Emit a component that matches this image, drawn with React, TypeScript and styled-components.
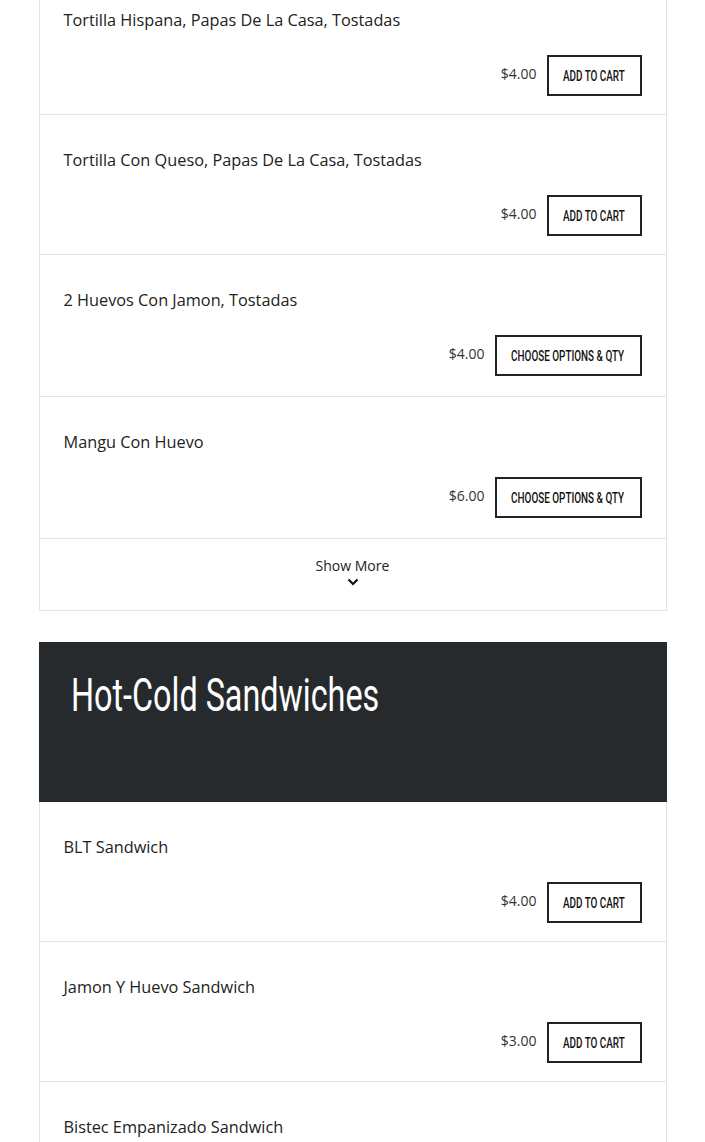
import React from 'react';
import styled, { createGlobalStyle } from 'styled-components';

const GlobalStyle = createGlobalStyle`
  html, body {
    margin: 0;
    padding: 0;
    background: #ffffff;
    font-family: "Open Sans", "Liberation Sans", sans-serif;
    color: #222;
  }
`;

// no condensed face installed, so Roboto gets squeezed horizontally
const condensed = `Roboto, "Liberation Sans", sans-serif`;

const Page = styled.div`
  width: 628px;
  margin: -25px auto 0;
  padding-bottom: 40px;
`;

const Menu = styled.div`
  border: 1px solid #e3e3e3;
  border-top: none;
`;

const Row = styled.div<{ $tall?: boolean }>`
  display: flex;
  flex-direction: column;
  padding: 33px 24px ${(p) => (p.$tall ? '20px' : '18px')} 24px;
  border-bottom: 1px solid #e3e3e3;
  &:last-child {
    border-bottom: none;
  }
`;

const Name = styled.div`
  font-size: 16.3px;
  line-height: 24px;
  color: #222;
`;

const Actions = styled.div`
  display: flex;
  justify-content: flex-end;
  align-items: center;
  gap: 10px;
  margin-top: 23px;
`;

const Price = styled.span`
  font-size: 14px;
  color: #333;
  margin-top: -5px;
`;

const Button = styled.button<{ $w: number }>`
  width: ${(p) => p.$w}px;
  height: 41px;
  padding: 0;
  display: flex;
  align-items: center;
  justify-content: center;
  background: #fff;
  border: 2px solid #222;
  color: #111;
  cursor: pointer;
`;

const ButtonLabel = styled.span`
  display: inline-block;
  white-space: nowrap;
  font-family: ${condensed};
  font-weight: 500;
  font-size: 15px;
  text-transform: uppercase;
  transform: scaleX(0.66);
`;

const ShowMore = styled.div`
  height: 71px;
  box-sizing: border-box;
  padding-top: 17px;
  display: flex;
  flex-direction: column;
  align-items: center;
  font-size: 14px;
  line-height: 19px;
  color: #222;
`;

const Section = styled.div`
  margin-top: 31px;
`;

const SectionHead = styled.div`
  background: #272a2d;
  height: 160px;
  padding: 26px 32px;
  box-sizing: border-box;
`;

const SectionTitle = styled.h2`
  margin: 0;
  font-family: ${condensed};
  font-weight: 400;
  font-size: 46px;
  line-height: 54px;
  color: #fff;
  white-space: nowrap;
  transform: scaleX(0.703);
  transform-origin: left center;
`;

type Item = { name: string; price: string; options?: boolean };

const breakfast: Item[] = [
  { name: 'Tortilla Hispana, Papas De La Casa, Tostadas', price: '$4.00' },
  { name: 'Tortilla Con Queso, Papas De La Casa, Tostadas', price: '$4.00' },
  { name: '2 Huevos Con Jamon, Tostadas', price: '$4.00', options: true },
  { name: 'Mangu Con Huevo', price: '$6.00', options: true },
];

const sandwiches: Item[] = [
  { name: 'BLT Sandwich', price: '$4.00' },
  { name: 'Jamon Y Huevo Sandwich', price: '$3.00' },
  { name: 'Bistec Empanizado Sandwich', price: '$5.00' },
];

const Chevron = () => (
  <svg width="12" height="8" viewBox="0 0 12 8" style={{ marginTop: 3 }}>
    <path d="M1.5 1.5 L6 6 L10.5 1.5" fill="none" stroke="#111" strokeWidth="2.2" />
  </svg>
);

const MenuRow: React.FC<{ item: Item }> = ({ item }) => (
  <Row $tall={item.options}>
    <Name>{item.name}</Name>
    <Actions>
      <Price>{item.price}</Price>
      <Button $w={item.options ? 147 : 95}>
        <ButtonLabel>{item.options ? 'Choose Options & Qty' : 'Add To Cart'}</ButtonLabel>
      </Button>
    </Actions>
  </Row>
);

export default function App() {
  return (
    <>
      <GlobalStyle />
      <Page>
        <Menu>
          {breakfast.map((it) => (
            <MenuRow key={it.name} item={it} />
          ))}
          <ShowMore>
            <span>Show More</span>
            <Chevron />
          </ShowMore>
        </Menu>
        <Section>
          <SectionHead>
            <SectionTitle>Hot-Cold Sandwiches</SectionTitle>
          </SectionHead>
          <Menu>
            {sandwiches.map((it) => (
              <MenuRow key={it.name} item={it} />
            ))}
          </Menu>
        </Section>
      </Page>
    </>
  );
}
